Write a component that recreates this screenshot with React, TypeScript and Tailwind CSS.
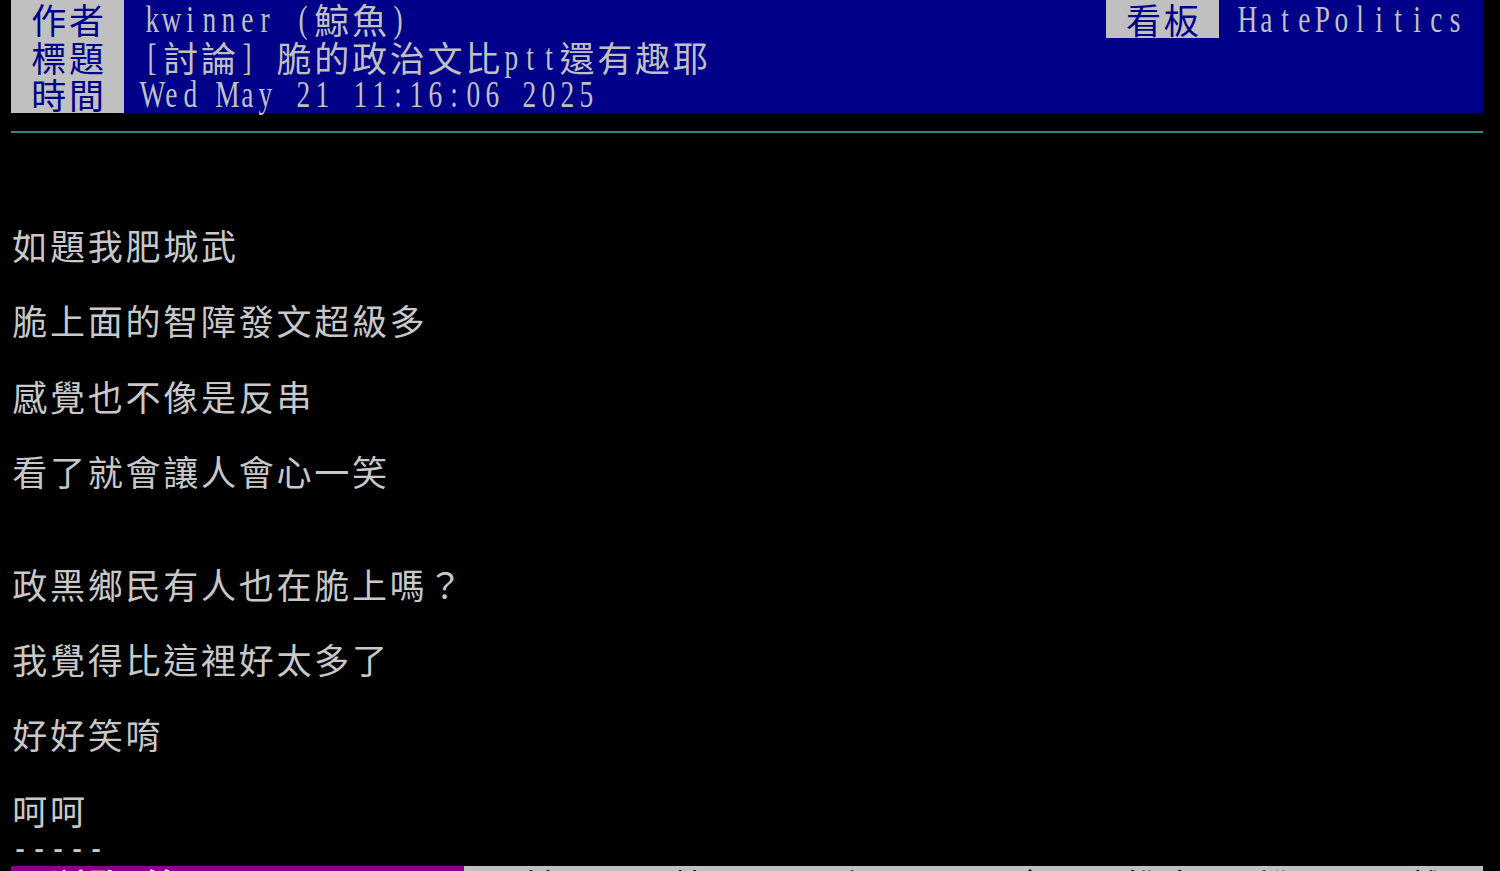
import type { ReactNode } from "react";

// ── Terminal cell helpers ────────────────────────────────────────────────────

// Big5 terminals draw CJK / fullwidth glyphs in two columns
function isWide(ch: string) {
  const c = ch.codePointAt(0) ?? 0;
  return (
    (c >= 0x2190 && c <= 0x21ff) ||
    (c >= 0x2500 && c <= 0x257f) ||
    (c >= 0x2e80 && c <= 0xa4cf) ||
    (c >= 0xac00 && c <= 0xd7a3) ||
    (c >= 0xf900 && c <= 0xfaff) ||
    (c >= 0xfe30 && c <= 0xfe4f) ||
    (c >= 0xff00 && c <= 0xff60)
  );
}

function Cells({ text }: { text: string }) {
  return (
    <>
      {Array.from(text).map((ch, i) =>
        isWide(ch) ? (
          <span
            key={i}
            className="flex justify-center w-[37.74px] shrink-0 font-['Noto_Sans_CJK_TC','Noto_Sans_CJK_SC',sans-serif] text-[35px]"
          >
            {ch}
          </span>
        ) : (
          <span key={i} className="flex justify-center w-[18.87px] shrink-0">
            <span className="inline-block scale-x-[0.74] font-['Liberation_Serif',serif] text-[37px] translate-y-[1px]">
              {ch === " " ? "\u00a0" : ch}
            </span>
          </span>
        )
      )}
    </>
  );
}

function Row({ children, className = "" }: { children?: ReactNode; className?: string }) {
  return (
    <div className={`flex h-[37.667px] leading-[37.667px] shrink-0 ${className}`}>
      {children}
    </div>
  );
}

function Label({ text }: { text: string }) {
  return (
    <span className="flex bg-[#c0c0c0] text-[#000088]">
      <Cells text={text} />
    </span>
  );
}

// ── Article body ─────────────────────────────────────────────────────────────

const BODY: string[] = [
  "",
  "",
  "如題我肥城武",
  "",
  "脆上面的智障發文超級多",
  "",
  "感覺也不像是反串",
  "",
  "看了就會讓人會心一笑",
  "",
  "",
  "政黑鄉民有人也在脆上嗎？",
  "",
  "我覺得比這裡好太多了",
  "",
  "好好笑唷",
  "",
  "呵呵",
  "-----",
];

export default function App() {
  return (
    <div className="w-[1500px] h-[871px] bg-black overflow-hidden pl-[11px] text-[#c8c8c8] flex flex-col">
      {/* Header */}
      <Row className="w-[1472px] bg-[#000088] text-[#c0c0c0]">
        <Label text=" 作者 " />
        <Cells text=" kwinner (鯨魚)" />
        <span className="flex-1" />
        <Label text=" 看板 " />
        <Cells text=" HatePolitics " />
      </Row>
      <Row className="w-[1472px] bg-[#000088] text-[#c0c0c0]">
        <Label text=" 標題 " />
        <Cells text=" [討論] 脆的政治文比ptt還有趣耶" />
      </Row>
      <Row className="w-[1472px] bg-[#000088] text-[#c0c0c0]">
        <Label text=" 時間 " />
        <Cells text=" Wed May 21 11:16:06 2025" />
      </Row>
      <Row className="items-center">
        <div className="h-[2px] w-[1472px] bg-[#2a8a7e]" />
      </Row>

      {BODY.map((line, i) => (
        <Row key={i}>
          <Cells text={line} />
        </Row>
      ))}

      {/* Status bar */}
      <Row className="w-[1472px] overflow-hidden">
        <span className="flex bg-[#880088] text-white font-bold">
          <Cells text="  瀏覽 第 1/2 頁 ( 54%) " />
        </span>
        <span className="flex flex-1 bg-[#c0c0c0] text-[#000000]">
          <Cells text=" 目前顯示: 第 01~22 行  (y)回應(X%)推文(h)說明(←)離開 " />
        </span>
      </Row>
    </div>
  );
}
